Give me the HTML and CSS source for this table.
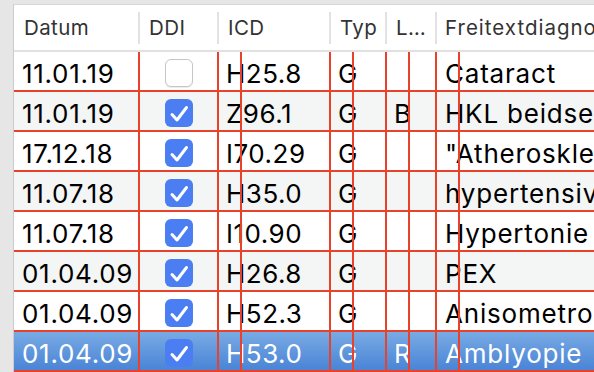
FILE: index.html
```html
<!DOCTYPE html>
<html lang="de">
<head>
    <meta charset="UTF-8">
    <title>Diagnosen</title>
    <link rel="stylesheet" href="styles.css">
</head>
<body>
<div class="table">
    <!-- Header -->
    <div class="head">
        <div class="th">Datum</div>
        <div class="th">DDI</div>
        <div class="th">ICD</div>
        <div class="th">Typ</div>
        <div class="th">L…</div>
        <div class="th last">Freitextdiagnose</div>
    </div>

    <div class="row">
        <div class="cell">11.01.19</div>
        <div class="cell ddi"><span class="box"></span></div>
        <div class="cell g">H25.8</div>
        <div class="cell g">G</div>
        <div class="cell g"></div>
        <div class="cell g">Cataract</div>
    </div>
    <div class="row alt">
        <div class="cell">11.01.19</div>
        <div class="cell ddi"><svg class="check" viewBox="0 0 28 28"><rect width="28" height="28" rx="6"/><path d="M7 15.5 L12 21 L21.5 8.5"/></svg></div>
        <div class="cell g">Z96.1</div>
        <div class="cell g">G</div>
        <div class="cell g">B</div>
        <div class="cell g">HKL beidseits</div>
    </div>
    <div class="row">
        <div class="cell">17.12.18</div>
        <div class="cell ddi"><svg class="check" viewBox="0 0 28 28"><rect width="28" height="28" rx="6"/><path d="M7 15.5 L12 21 L21.5 8.5"/></svg></div>
        <div class="cell g">I70.29</div>
        <div class="cell g">G</div>
        <div class="cell g"></div>
        <div class="cell g">"Atherosklerose</div>
    </div>
    <div class="row alt">
        <div class="cell">11.07.18</div>
        <div class="cell ddi"><svg class="check" viewBox="0 0 28 28"><rect width="28" height="28" rx="6"/><path d="M7 15.5 L12 21 L21.5 8.5"/></svg></div>
        <div class="cell g">H35.0</div>
        <div class="cell g">G</div>
        <div class="cell g"></div>
        <div class="cell g">hypertensive Retinopathie</div>
    </div>
    <div class="row">
        <div class="cell">11.07.18</div>
        <div class="cell ddi"><svg class="check" viewBox="0 0 28 28"><rect width="28" height="28" rx="6"/><path d="M7 15.5 L12 21 L21.5 8.5"/></svg></div>
        <div class="cell g">I10.90</div>
        <div class="cell g">G</div>
        <div class="cell g"></div>
        <div class="cell g">Hypertonie</div>
    </div>
    <div class="row alt">
        <div class="cell">01.04.09</div>
        <div class="cell ddi"><svg class="check" viewBox="0 0 28 28"><rect width="28" height="28" rx="6"/><path d="M7 15.5 L12 21 L21.5 8.5"/></svg></div>
        <div class="cell g">H26.8</div>
        <div class="cell g">G</div>
        <div class="cell g"></div>
        <div class="cell g">PEX</div>
    </div>
    <div class="row">
        <div class="cell">01.04.09</div>
        <div class="cell ddi"><svg class="check" viewBox="0 0 28 28"><rect width="28" height="28" rx="6"/><path d="M7 15.5 L12 21 L21.5 8.5"/></svg></div>
        <div class="cell g">H52.3</div>
        <div class="cell g">G</div>
        <div class="cell g"></div>
        <div class="cell g">Anisometropie</div>
    </div>
    <div class="row selected">
        <div class="cell">01.04.09</div>
        <div class="cell ddi"><svg class="check" viewBox="0 0 28 28"><rect width="28" height="28" rx="6"/><path d="M7 15.5 L12 21 L21.5 8.5"/></svg></div>
        <div class="cell g">H53.0</div>
        <div class="cell g">G</div>
        <div class="cell g">R</div>
        <div class="cell g">Amblyopie</div>
    </div>
</div>
</body>
</html>
```

FILE: styles.css
```css
/* General */
body {
    margin: 0;
    background-color: #e6e6e6;
    font-family: Inter, "Liberation Sans", sans-serif;
    overflow: hidden;
}

.table {
    margin: 4px 0 0 13px;
    border-top: 1px solid #d8d8d8;
    border-left: 1px solid #cbcbcb;
    background-color: #ffffff;
}

/* Header */
.head,
.row {
    display: grid;
    grid-template-columns: 126px 79px 112px 56px 50px 1fr;
}

.head {
    height: 47px;
    border-bottom: 2px solid #e1e1e1;
    box-sizing: border-box;
}

.th {
    font-size: 20.5px;
    letter-spacing: 0.4px;
    line-height: 45px;
    color: #333333;
    padding-left: 9px;
    white-space: nowrap;
    overflow: hidden;
    background: linear-gradient(#e2e2e2, #e2e2e2) right center / 2px 32px no-repeat;
}

.th:first-child {
    padding-left: 10px;
}

.th.last {
    background: none;
    padding-left: 8px;
    letter-spacing: 1px;
}

/* Rows */
.row {
    height: 40px;
    box-sizing: border-box;
    border-bottom: 2px solid #e9422a;
    background-color: #ffffff;
    color: #000000;
}

.row.alt {
    background-color: #f4f5f5;
}

.row.selected {
    background: linear-gradient(#78aae4, #4a84d6);
    color: #ffffff;
}

.cell {
    position: relative;
    box-sizing: border-box;
    border-right: 2px solid #e9422a;
    font-size: 26px;
    letter-spacing: 0.5px;
    line-height: 32px;
    padding: 6px 0 0 7px;
    white-space: nowrap;
    overflow: hidden;
}

.cell:first-child {
    padding-left: 8px;
    letter-spacing: 0.7px;
}

.cell:last-child {
    border-right: none;
    padding-left: 8px;
    letter-spacing: 0.8px;
}

/* guide lines */
.cell.g::after {
    content: "";
    position: absolute;
    top: 0;
    bottom: 0;
    left: 21px;
    width: 2px;
    background-color: #e9422a;
}

/* Checkboxes */
.ddi {
    display: flex;
    justify-content: center;
    padding: 7px 0 0 0;
}

.box {
    width: 28px;
    height: 28px;
    box-sizing: border-box;
    border: 1px solid #c6c6c6;
    border-radius: 6px;
    background-color: #ffffff;
    box-shadow: 0 1px 1px rgba(0, 0, 0, 0.08);
}

.check {
    width: 28px;
    height: 28px;
}

.check rect {
    fill: #4a7ef2;
}

.check path {
    fill: none;
    stroke: #ffffff;
    stroke-width: 3;
    stroke-linecap: round;
    stroke-linejoin: round;
}
```
